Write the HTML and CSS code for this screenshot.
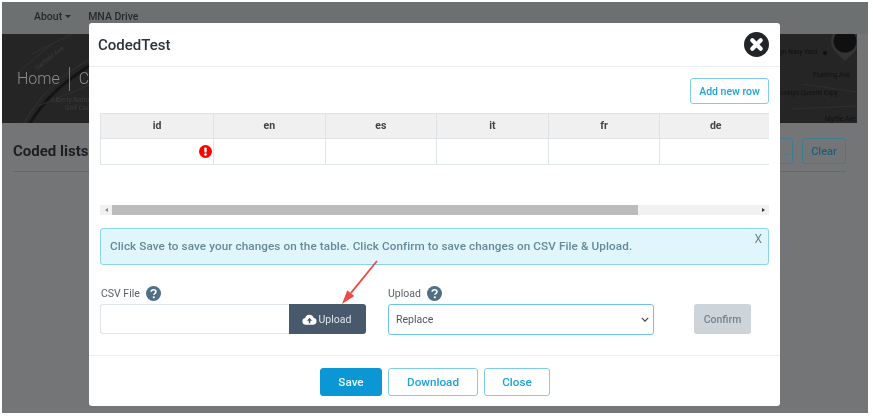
FILE: index.html
```html
<!DOCTYPE html>
<html lang="en">
<head>
<meta charset="utf-8">
<title>CodedTest</title>
<link rel="stylesheet" href="styles.css">
</head>
<body>
<div class="screen">
  <div class="page">
    <nav class="nav">
      <span class="nav-item">About<i class="caret"></i></span>
      <span class="nav-item">MNA Drive</span>
    </nav>
    <header class="hero">
      <svg class="map-lines" viewBox="0 0 855 89" preserveAspectRatio="none" aria-hidden="true">
        <path d="M28 89C45 62 62 48 90 30" fill="none" stroke="#141414" stroke-width="3"/>
        <path d="M22 89C40 58 58 42 90 24" fill="none" stroke="#333" stroke-width="1"/>
        <path d="M30 20L70 0M36 72L90 50M14 40L50 10" fill="none" stroke="#303030" stroke-width="1"/>
        <path d="M800 50L855 58M790 75L855 72" fill="none" stroke="#2f2f2f" stroke-width="1"/>
        <path d="M829 7a14 14 0 1 1 28 0c0 9-7 13-14 20c-7-7-14-11-14-20z" fill="#333"/>
        <circle cx="843" cy="7" r="11.500" fill="#101010"/>
        <circle cx="823" cy="19" r="2" fill="#111"/>
      </svg>
      <span class="map-label map-a">yn Navy Yard</span>
      <span class="map-label map-b">Flushing Ave</span>
      <span class="map-label map-c">ooklyn Queens Expy</span>
      <span class="map-label map-d">Myrtle Ave</span>
      <span class="map-label map-e">Liberty National</span>
      <span class="map-label map-f">Golf Course</span>
      <span class="map-label map-g">Garfield Ave</span>
      <span class="crumb">Home</span><span class="crumb-sep"></span><span class="crumb">C</span>
    </header>
    <section class="list-head">
      <h2 class="list-title">Coded lists</h2>
      <div class="list-actions">
        <span class="ghost ghost-clipped">…</span>
        <span class="ghost">Clear</span>
      </div>
    </section>
  </div>

  <div class="modal">
    <div class="modal-header">
      <h1 class="modal-title">CodedTest</h1>
      <button class="close-round" aria-label="Close">
        <svg viewBox="0 0 26 26" width="25" height="25" aria-hidden="true">
          <circle cx="13" cy="13" r="13" fill="#212529"/>
          <path d="M8.600 8.600L17.400 17.400M17.400 8.600L8.600 17.400" stroke="#fff" stroke-width="4.400" stroke-linecap="round"/>
        </svg>
      </button>
    </div>
    <div class="modal-body">
      <div class="add-row"><button class="btn btn-outline btn-small">Add new row</button></div>
      <div class="grid-clip">
        <table class="grid">
          <thead>
            <tr><th class="col-id">id</th><th>en</th><th>es</th><th>it</th><th>fr</th><th>de</th></tr>
          </thead>
          <tbody>
            <tr>
              <td class="cell-error">
                <svg class="err" viewBox="0 0 14 14" width="13" height="13" aria-hidden="true">
                  <circle cx="7" cy="7" r="7" fill="#f00"/>
                  <rect x="5.700" y="2.600" width="2.600" height="5.600" rx="1" fill="#fff"/>
                  <circle cx="7" cy="10.300" r="1.400" fill="#fff"/>
                </svg>
              </td>
              <td></td><td></td><td></td><td></td><td></td>
            </tr>
          </tbody>
        </table>
      </div>
      <div class="hscroll">
        <span class="arrow arrow-left"></span>
        <div class="thumb"></div>
        <span class="arrow arrow-right"></span>
      </div>
      <div class="alert">
        <span>Click Save to save your changes on the table. Click Confirm to save changes on CSV File &amp; Upload.</span>
        <span class="alert-x">X</span>
      </div>
      <div class="form-row">
        <div class="field field-file">
          <label class="label">CSV File
            <svg class="help" viewBox="0 0 16 16" width="15" height="15" aria-hidden="true">
              <circle cx="8" cy="8" r="8" fill="#4f6f82"/>
              <path d="M5.500 6.200C5.600 4.700 6.600 4 8 4c1.500 0 2.600.8 2.600 2.100 0 1-.6 1.500-1.300 2-.6.400-.9.700-.9 1.300" fill="none" stroke="#fff" stroke-width="1.800"/>
              <circle cx="8.300" cy="12" r="1.200" fill="#fff"/>
            </svg>
          </label>
          <div class="file-group">
            <div class="file-input"></div>
            <div class="file-btn">
              <svg viewBox="0 0 20 14" width="15" height="11" aria-hidden="true">
                <path d="M5 14a4.500 4.500 0 0 1-.9-8.900A6 6 0 0 1 15.500 4.600 4.800 4.800 0 0 1 15.500 14z" fill="#fff"/>
                <path d="M10 4.800L6.600 8.500H9V12h2V8.500h2.400z" fill="#47596a"/>
              </svg>
              <span>Upload</span>
            </div>
          </div>
        </div>
        <div class="field field-mode">
          <label class="label">Upload
            <svg class="help" viewBox="0 0 16 16" width="15" height="15" aria-hidden="true">
              <circle cx="8" cy="8" r="8" fill="#4f6f82"/>
              <path d="M5.500 6.200C5.600 4.700 6.600 4 8 4c1.500 0 2.600.8 2.600 2.100 0 1-.6 1.500-1.300 2-.6.400-.9.700-.9 1.300" fill="none" stroke="#fff" stroke-width="1.800"/>
              <circle cx="8.300" cy="12" r="1.200" fill="#fff"/>
            </svg>
          </label>
          <div class="select">
            <span>Replace</span>
            <svg viewBox="0 0 10 6" width="8" height="5" aria-hidden="true"><path d="M1 1l4 4 4-4" fill="none" stroke="#444" stroke-width="1.500"/></svg>
          </div>
        </div>
        <button class="btn-confirm">Confirm</button>
      </div>
    </div>
    <div class="modal-footer">
      <button class="btn btn-primary">Save</button>
      <button class="btn btn-outline btn-download">Download</button>
      <button class="btn btn-outline btn-close">Close</button>
    </div>
    <svg class="arrow-note" viewBox="0 0 60 60" width="60" height="60" aria-hidden="true">
      <path d="M39 5L12.800 37.100" stroke="#ee4a46" stroke-width="1.800" fill="none"/>
      <path d="M4 48L9.300 34.300L16.300 39.900z" fill="#ee4a46"/>
    </svg>
  </div>
</div>
</body>
</html>
```
FILE: styles.css
```css
* { box-sizing: border-box; }
html, body { margin: 0; padding: 0; background: #fff; }
body { width: 873px; height: 416px; overflow: hidden; font-family: Roboto, "Liberation Sans", sans-serif; }
.screen { position: relative; width: 873px; height: 416px; padding: 2px 5px 3px 2px; filter: blur(.35px); }
.page { height: 100%; background: #747577; padding-right: 11px; }
.nav { height: 32px; margin-right: -11px; background: #6d7070; display: flex; align-items: center; padding: 0 0 3px 32px; gap: 17px; }
.nav-item { font-size: 10.500px; font-weight: 500; color: #262a2c; display: inline-flex; align-items: center; }
.caret { display: inline-block; margin-left: 3px; border-top: 3px solid #262a2c; border-left: 3px solid transparent; border-right: 3px solid transparent; }
.hero { position: relative; height: 89px; background: #252525; display: flex; align-items: center; padding: 0 0 0 15px; overflow: hidden; }
.map-lines { position: absolute; inset: 0; width: 100%; height: 100%; }
.crumb { position: relative; font-size: 16px; font-weight: 300; color: #8d8d8d; }
.crumb-sep { position: relative; width: 1px; height: 24px; margin: 0 9px; background: #7b7b7b; }
.map-label { position: absolute; font-size: 6.500px; line-height: 8px; color: #121212; white-space: nowrap; }
.map-a { left: 778px; top: 14px; }
.map-b { left: 811px; top: 37px; }
.map-c { left: 778px; top: 55px; }
.map-d { left: 823px; top: 81px; }
.map-e { left: 50px; top: 62px; color: #3c3c3c; }
.map-f { left: 63px; top: 70px; color: #3c3c3c; }
.map-g { left: 30px; top: 20px; color: #3c3c3c; transform: rotate(-38deg); }
.list-head { margin: 0 11px; height: 49px; border-bottom: 1px solid #66696b; display: flex; align-items: flex-start; justify-content: space-between; padding-top: 15px; }
.list-title { margin: 0; padding-top: 4px; font-size: 15px; font-weight: 700; line-height: 18px; color: #1c1f21; }
.list-actions { display: flex; gap: 9px; }
.ghost { display: flex; align-items: center; justify-content: center; width: 44px; height: 26px; border: 1px solid #3f7c92; border-radius: 3px; font-size: 11px; font-weight: 500; color: #1f6079; }
.ghost-clipped { color: #3f7c92; justify-content: flex-end; padding-right: 2px; }

.modal { position: absolute; left: 89px; top: 23px; width: 691px; height: 383px; background: #fff; border-radius: 3px; display: flex; flex-direction: column; }
.modal-header { flex: none; height: 44px; display: flex; align-items: center; justify-content: space-between; padding: 0 11px 0 9px; border-bottom: 1px solid #eceff1; }
.modal-title { margin: 0; font-size: 15px; font-weight: 500; color: #2b3238; }
.close-round { display: flex; padding: 0; margin: 0; background: none; border: 0; }
.modal-body { flex: 1; padding: 11px 11px 0 11px; }
.add-row { display: flex; justify-content: flex-end; height: 35px; }
.btn { font-family: inherit; font-weight: 500; border-radius: 3px; background: #fff; padding: 0; }
.btn-outline { border: 1px solid #7fcdec; color: #1ba3dd; }
.btn-small { width: 79px; height: 26px; font-size: 10.500px; }
.grid-clip { width: 669px; overflow: hidden; }
.grid { width: 672px; border-collapse: collapse; table-layout: fixed; }
.grid .col-id { width: 113px; }
.grid th { height: 25px; padding: 0 0 2px; background: #f0f0f0; border: 1px solid #dde3e6; font-size: 10.500px; font-weight: 700; color: #444; text-align: center; }
.grid td { height: 26px; padding: 0 1px 0 0; background: #fff; border: 1px solid #dfe6ea; border-top: 0; }
.err { display: block; margin-left: auto; }
.hscroll { display: flex; align-items: center; height: 10px; margin-top: 40px; background: #f1f1f1; }
.thumb { width: 526px; height: 10px; background: #bcbcbc; }
.arrow { flex: none; width: 12px; height: 10px; display: flex; align-items: center; justify-content: center; }
.arrow::after { content: ""; border-top: 2px solid transparent; border-bottom: 2px solid transparent; }
.arrow-left::after { border-right: 3px solid #888; }
.arrow-right { margin-left: auto; }
.arrow-right::after { border-left: 3px solid #333; }
.alert { display: flex; justify-content: space-between; height: 37px; margin-top: 13px; padding: 0 6px 0 9px; background: #e0f5fc; border: 1px solid #8ad6ea; border-radius: 3px; font-size: 11.700px; font-weight: 500; letter-spacing: .1px; line-height: 35px; color: #648a99; }
.alert-x { font-size: 12px; font-weight: 400; line-height: 20px; }
.form-row { display: flex; align-items: flex-end; margin-top: 18px; }
.field { display: flex; flex-direction: column; }
.field-file { width: 266px; }
.field-mode { width: 266px; margin-left: 22px; }
.label { display: flex; align-items: center; gap: 6px; height: 21px; padding-left: 1px; font-size: 10.500px; color: #5a6268; }
.field-mode .label { padding-left: 0; }
.help { flex: none; margin-top: -1px; }
.file-group { display: flex; height: 30px; }
.file-input { flex: 1; border: 1px solid #dfe5e8; border-right: 0; border-radius: 3px 0 0 3px; }
.file-btn { flex: none; width: 77px; display: flex; align-items: center; justify-content: center; gap: 2px; padding-right: 2px; background: #47596a; border-radius: 0 3px 3px 0; font-size: 10.500px; color: #dfe6ea; }
.select { display: flex; align-items: center; justify-content: space-between; height: 31px; margin-bottom: -1px; padding: 0 4px 0 7px; border: 1px solid #6ec2e6; border-radius: 3px; font-size: 10.500px; color: #50585e; }
.btn-confirm { width: 57px; height: 30px; margin-left: 40px; padding: 0; border: 0; border-radius: 3px; background: #cdd4da; font-family: inherit; font-size: 10.500px; font-weight: 500; color: #74858f; }
.modal-footer { flex: none; height: 51px; display: flex; justify-content: center; align-items: flex-start; gap: 6px; padding: 12px 0 0 1px; border-top: 1px solid #eceff1; }
.modal-footer .btn { height: 28px; font-size: 11.700px; }
.btn-primary { width: 62px; border: 1px solid #0a97d4; background: #0a97d4; color: #e9f7fd; }
.btn-download { width: 90px; }
.btn-close { width: 66px; }
.arrow-note { position: absolute; left: 249px; top: 233px; }
```
